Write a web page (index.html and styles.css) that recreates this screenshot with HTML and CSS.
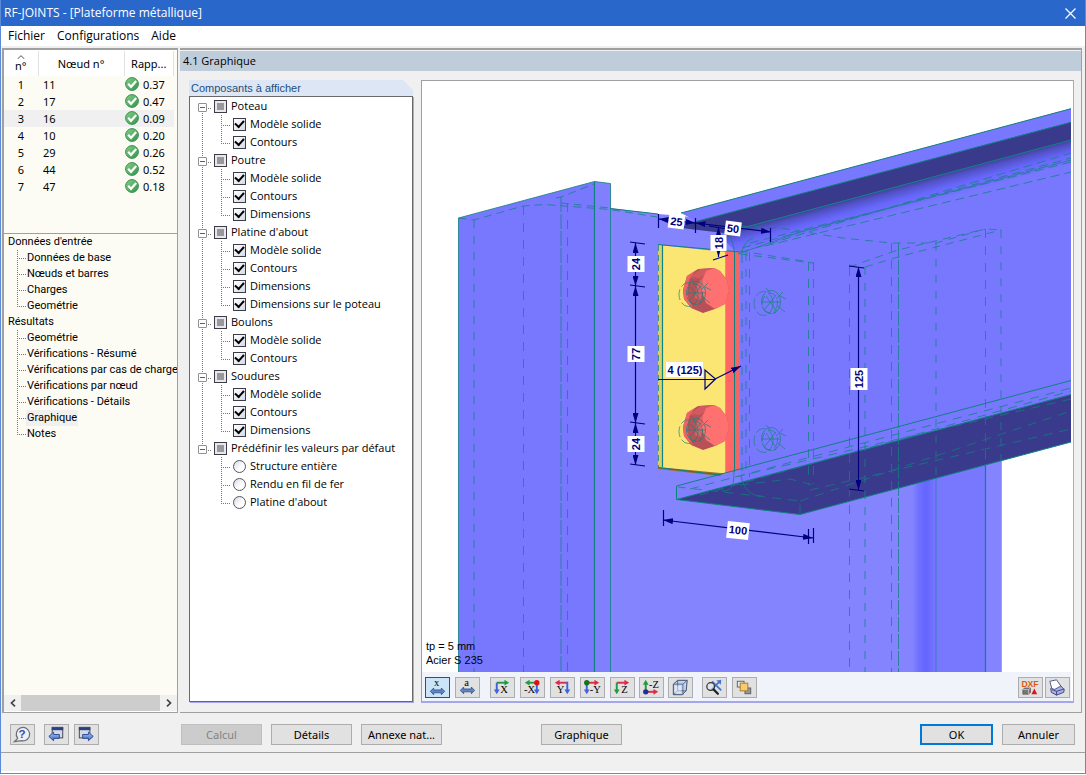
FILE: index.html
```html
<!DOCTYPE html>
<html lang="fr">
<head>
<meta charset="utf-8">
<title>RF-JOINTS - [Plateforme métallique]</title>
<link rel="stylesheet" href="styles.css">
</head>
<body>
<svg class="defs" width="0" height="0" aria-hidden="true">
  <defs>
    <linearGradient id="ok-fill" x1="0" y1="0" x2="1" y2="1"><stop offset="0" stop-color="#86cf8a"/><stop offset="1" stop-color="#2f9448"/></linearGradient>
    <linearGradient id="blue-fill" x1="0" y1="0" x2="0" y2="1"><stop offset="0" stop-color="#a9c6f5"/><stop offset="1" stop-color="#3b68c0"/></linearGradient>
    <symbol id="ok" viewBox="0 0 14 14"><circle cx="7" cy="7" r="6.4" fill="url(#ok-fill)" stroke="#3c8f52" stroke-width="1"/><path d="M3.2 6.8 6 9.8 11.2 4" fill="none" stroke="#fff" stroke-width="2.2"/></symbol>
    <symbol id="spread" viewBox="0 0 16 8"><path d="M0.500 4 4 .5V2.500H12V.5L15.500 4 12 7.500V5.500H4V7.500Z" fill="#5d85c8" stroke="#2c4a86" stroke-width=".8"/></symbol>
  </defs>
</svg>
<div class="window">
  <header class="titlebar">
    <h1>RF-JOINTS - [Plateforme métallique]</h1>
    <button class="close" aria-label="Fermer"><svg width="11" height="11" viewBox="0 0 11 11"><path d="M.5.5l10 10M10.500.5l-10 10" stroke="#fff" stroke-width="1.200"/></svg></button>
  </header>
  <nav class="menubar"><a href="#fichier">Fichier</a><a href="#config">Configurations</a><a href="#aide">Aide</a></nav>

  <main class="workspace">
    <aside class="side">
      <div class="results">
        <table>
          <thead><tr>
            <th class="c-no"><svg width="8" height="4" viewBox="0 0 8 4"><path d="M.5 4 4 .7 7.500 4" fill="none" stroke="#555"/></svg><span>n°</span></th>
            <th class="c-node">Nœud n°</th><th class="c-ratio">Rapp...</th>
          </tr></thead>
          <tbody>
            <tr><td>1</td><td>11</td><td><svg class="ok"><use href="#ok"/></svg>0.37</td></tr>
            <tr><td>2</td><td>17</td><td><svg class="ok"><use href="#ok"/></svg>0.47</td></tr>
            <tr class="current"><td>3</td><td>16</td><td><svg class="ok"><use href="#ok"/></svg>0.09</td></tr>
            <tr><td>4</td><td>10</td><td><svg class="ok"><use href="#ok"/></svg>0.20</td></tr>
            <tr><td>5</td><td>29</td><td><svg class="ok"><use href="#ok"/></svg>0.26</td></tr>
            <tr><td>6</td><td>44</td><td><svg class="ok"><use href="#ok"/></svg>0.52</td></tr>
            <tr><td>7</td><td>47</td><td><svg class="ok"><use href="#ok"/></svg>0.18</td></tr>
          </tbody>
        </table>
      </div>
      <nav class="navtree">
        <span class="root">Données d'entrée</span>
        <ul>
          <li><a href="#base">Données de base</a></li>
          <li><a href="#noeuds">Nœuds et barres</a></li>
          <li><a href="#charges">Charges</a></li>
          <li><a href="#geo1">Geométrie</a></li>
        </ul>
        <span class="root">Résultats</span>
        <ul>
          <li><a href="#geo2">Geométrie</a></li>
          <li><a href="#resume">Vérifications - Résumé</a></li>
          <li><a href="#cas">Vérifications par cas de charge</a></li>
          <li><a href="#noeud">Vérifications par nœud</a></li>
          <li><a href="#details">Vérifications - Détails</a></li>
          <li><a href="#graphique" class="selected" aria-current="page">Graphique</a></li>
          <li><a href="#notes">Notes</a></li>
        </ul>
      </nav>
      <div class="hscroll">
        <button aria-label="Défiler à gauche"><svg width="6" height="8" viewBox="0 0 6 8"><path d="M5 .7 1.500 4 5 7.300" fill="none" stroke="#444" stroke-width="1.700"/></svg></button>
        <div class="thumb"></div>
        <button aria-label="Défiler à droite"><svg width="6" height="8" viewBox="0 0 6 8"><path d="M1 .7 4.500 4 1 7.300" fill="none" stroke="#444" stroke-width="1.700"/></svg></button>
      </div>
    </aside>

    <section class="panel">
      <h2>4.1 Graphique</h2>
      <div class="panel-body">
        <section class="components">
          <h3>Composants à afficher</h3>
          <ul class="tree">
            <li class="group"><div class="head"><button class="toggle" aria-label="Réduire"></button><label><input type="checkbox" class="partial">Poteau</label></div>
              <ul><li><label><input type="checkbox" checked>Modèle solide</label></li><li><label><input type="checkbox" checked>Contours</label></li></ul></li>
            <li class="group"><div class="head"><button class="toggle" aria-label="Réduire"></button><label><input type="checkbox" class="partial">Poutre</label></div>
              <ul><li><label><input type="checkbox" checked>Modèle solide</label></li><li><label><input type="checkbox" checked>Contours</label></li><li><label><input type="checkbox" checked>Dimensions</label></li></ul></li>
            <li class="group"><div class="head"><button class="toggle" aria-label="Réduire"></button><label><input type="checkbox" class="partial">Platine d'about</label></div>
              <ul><li><label><input type="checkbox" checked>Modèle solide</label></li><li><label><input type="checkbox" checked>Contours</label></li><li><label><input type="checkbox" checked>Dimensions</label></li><li><label><input type="checkbox" checked>Dimensions sur le poteau</label></li></ul></li>
            <li class="group"><div class="head"><button class="toggle" aria-label="Réduire"></button><label><input type="checkbox" class="partial">Boulons</label></div>
              <ul><li><label><input type="checkbox" checked>Modèle solide</label></li><li><label><input type="checkbox" checked>Contours</label></li></ul></li>
            <li class="group"><div class="head"><button class="toggle" aria-label="Réduire"></button><label><input type="checkbox" class="partial">Soudures</label></div>
              <ul><li><label><input type="checkbox" checked>Modèle solide</label></li><li><label><input type="checkbox" checked>Contours</label></li><li><label><input type="checkbox" checked>Dimensions</label></li></ul></li>
            <li class="group"><div class="head"><button class="toggle" aria-label="Réduire"></button><label><input type="checkbox" class="partial">Prédéfinir les valeurs par défaut</label></div>
              <ul><li><label><input type="radio" name="preset">Structure entière</label></li><li><label><input type="radio" name="preset">Rendu en fil de fer</label></li><li><label><input type="radio" name="preset">Platine d'about</label></li></ul></li>
          </ul>
        </section>

        <section class="viewer">
          <svg class="scene" viewBox="422 81 649 591" preserveAspectRatio="xMinYMin slice" role="img" aria-label="Assemblage par platine d'about">
            <defs>
              <linearGradient id="shade" gradientUnits="userSpaceOnUse" x1="780" y1="216" x2="787" y2="242"><stop offset="0" stop-color="#3a3a8c"/><stop offset=".25" stop-color="#5252c8"/><stop offset=".55" stop-color="#6666fb"/><stop offset="1" stop-color="#7878ff"/></linearGradient>
              <linearGradient id="fillet" gradientUnits="userSpaceOnUse" x1="898" y1="0" x2="936" y2="0"><stop offset="0" stop-color="#8484ff"/><stop offset=".38" stop-color="#8484ff"/><stop offset=".55" stop-color="#7070ff"/><stop offset=".74" stop-color="#6464ff"/><stop offset="1" stop-color="#7878ff"/></linearGradient>
              <marker id="arrow" viewBox="0 0 10 6" refX="10" refY="3" markerWidth="10" markerHeight="6" markerUnits="userSpaceOnUse" orient="auto-start-reverse"><path d="M0 0 10 3 0 6Z" fill="#00007e"/></marker>
              <g id="bolt">
                <path d="M683 290 687 276 698 269 714 268 720 271 727 280 729 291 725 304 715 309 703 313 691 308 684 299Z" fill="#b95058"/>
                <path d="M683 290 687 276 695 271 689 280 688 297 693 309 684 299Z" fill="#f06464"/>
                <path d="M694 274 700 269 714 268 703 276 697 280 690 277Z" fill="#d05a5e"/>
                <path d="M694 277 688 284 688 297 697 309 703 295 701 279Z" fill="#b85256"/>
                <path d="M697 285 706 273 701 301 695 298Z" fill="#df6266"/>
                <path d="M706 271 714 268 720 271 727 280 729 291 725 304 715 309 706 303 702 292 703 279Z" fill="#ff7070"/>
              </g>
              <g id="hole" fill="none" stroke="#188080" stroke-width=".7">
                <ellipse cx="763.500" cy="303.500" rx="9.500" ry="12" stroke-dasharray="11 3"/>
                <ellipse cx="771" cy="302" rx="9.500" ry="11.500" stroke-dasharray="14 1"/>
                <ellipse cx="770" cy="303" rx="7.500" ry="10" stroke-dasharray="9 4"/>
                <path d="M766 296 775 309M776 295 765 309M763 302H780M776 299 783 292M778 306 785 312M780 296 786 299M766 288 770 293M777 310 774 314"/>
              </g>
            </defs>
            <rect x="422" y="81" width="649" height="591" fill="#fff"/>

            <!-- column -->
            <path d="M610 208 658 214 683 216 740 224V300H900V672H610Z" fill="#8484ff"/>
            <path d="M458.500 218 594.500 181.500V672H458.500Z" fill="#7878ff"/>
            <path d="M594.500 181.500 610.500 183.500V672H594.500Z" fill="#8080ff"/>
            <rect x="898" y="400" width="38" height="272" fill="url(#fillet)"/>
            <rect x="936" y="400" width="49" height="272" fill="#7878ff"/>
            <rect x="985" y="400" width="16" height="272" fill="#8484ff"/>

            <!-- beam -->
            <path d="M681 213 1071 108.500V395L740 483V252L728 240 696 221Z" fill="#7878ff"/>
            <path d="M724 233 1071 140V168L740 256 727 243Z" fill="url(#shade)"/>
            <path d="M696 221.500 1071 122V140L730 231 724 233 681 228 690 222Z" fill="#3a3a8c"/>
            <path d="M676.500 486 740 469V483L676.500 499.500Z" fill="#8080ff"/>
            <path d="M676.500 499.500 1071 394.500V442L800 514.500Z" fill="#3a3a8c"/>

            <!-- end plate and welds -->
            <path d="M658 467 725 472 720 476 658 469Z" fill="#9a6d28"/>
            <path d="M658 245 725.500 252V473.500L658 467Z" fill="#fbe674"/>
            <path d="M658 245H663V467H658Z" fill="#dfcd68"/>
            <path d="M725.500 252H740V469L725.500 474Z" fill="#ff6666"/>
            <path d="M735 252H740V469L735 471Z" fill="#e66"/>
            <use href="#bolt"/><use href="#bolt" y="137"/>

            <!-- contours -->
            <g fill="none" stroke="#108080">
              <path d="M458.500 672V218L594.500 181.500 610.500 183.500V672" stroke-width="1" opacity=".8"/>
              <path d="M594.500 181.500V672M985.500 465V672M662.500 245V467" stroke-width="1.200"/>
              <path d="M610 208.500 658 214M681 213 1071 108.700M696 221.500 1071 122.300M676.500 499.500V486L1071 380.500M676.500 499.500 1071 394.500M676.500 499.500 800 514.500 1071 442M658 244.500 740 252M734.500 252V472M658 467.500 720 475M724 233 1071 140" stroke-width="1"/>
              <path d="M1001.500 461V672M936 478V672" opacity=".55"/>
              <g opacity=".75">
                <path d="M523.500 206V672M567.500 203V672M849.500 267V672M891.500 243V672M985.500 229V465M749.500 252V477M808.500 262V485M813.500 262V484" stroke-dasharray="9 8"/>
                <path d="M561 197V672M898.500 243V672" stroke-dasharray="15 2"/>
                <path d="M658.500 245V467" stroke-dasharray="6 4"/>
                <path d="M458.500 218 474 220 523 206 545 204.500 610 209.500 657 217M556 198 561 197 594 184M561 203 610 208" stroke-dasharray="8 5"/>
                <path d="M740 254 813 263M740 251 810 262M740 226 780 228 843 238 891 243 936 243 985 229 1001 230M849 267 898 250 985 229M865 267 898 257 1001 230M849 265 865 268" stroke-dasharray="8 6"/>
                <path d="M742 252 1071 153M742 248 1071 158M750 243 1071 162M765 246 1071 172" stroke-dasharray="9 5"/>
                <path d="M738 254 800 232 1071 160" stroke-dasharray="12 1"/>
                <path d="M690 489 1071 388M700 495 1071 391M735 477 1071 399M800 501 1071 411M810 490 1071 429M800 514V501L740 494 678 487M740 485 790 479 813 485" stroke-dasharray="9 7"/>
                <path d="M734 470C734 486 732 491 722 491M741 476C744 490 751 496 762 496M734 252C734 244 731 238 728 235M742 252C744 243 748 240 753 238"/>
              </g>
              <g opacity=".38" stroke-width="2" stroke-dasharray="8 8">
                <path d="M474 220V672M865 267V672M936 243V480M1001 230V461M742 255V472M746 253V475"/>
              </g>
            </g>
            <use href="#hole"/><use href="#hole" y="137"/>
            <use href="#hole" x="-75" y="-9"/><use href="#hole" x="-75" y="128"/>

            <!-- dimensions -->
            <g stroke="#00007e" fill="none" stroke-width="1.200">
              <path d="M658.500 214V228M695.500 218V233M770.500 228V242M630 242 645 244M630 285 645 287M630 422 645 424M630 464 645 466M713 260 728 255M709 226 727 229M849 266 864 268M849 489 864 491M663.500 510V526M808.500 529V544M813.500 528V543"/>
              <g marker-start="url(#arrow)" marker-end="url(#arrow)">
                <path d="M658.500 219 695.500 223"/><path d="M695.500 223 771 232"/><path d="M718.500 227V257"/>
                <path d="M635.500 243V286"/><path d="M635.500 286V423"/><path d="M635.500 423V465"/>
                <path d="M858.500 267V490"/><path d="M663 520 813 538"/>
              </g>
              <path d="M658 379.500H715M705 370V389L715.500 379Z"/>
              <path d="M715 379 741 366" marker-end="url(#arrow)"/>
            </g>
            <g class="dims">
              <g transform="translate(676.500 221.500) rotate(7)"><rect x="-8" y="-7" width="16" height="14"/><text y="4">25</text></g>
              <g transform="translate(733 228.500) rotate(7)"><rect x="-8" y="-7" width="16" height="14"/><text y="4">50</text></g>
              <g transform="translate(718.500 243) rotate(-90)"><rect x="-8" y="-8" width="16" height="16"/><text y="4">18</text></g>
              <g transform="translate(635.500 264) rotate(-90)"><rect x="-8" y="-8" width="16" height="17"/><text y="4">24</text></g>
              <g transform="translate(635.500 354) rotate(-90)"><rect x="-8" y="-8" width="16" height="17"/><text y="4">77</text></g>
              <g transform="translate(635.500 444) rotate(-90)"><rect x="-8" y="-8" width="16" height="17"/><text y="4">24</text></g>
              <g transform="translate(858.500 379) rotate(-90)"><rect x="-11" y="-8" width="22" height="17"/><text y="4">125</text></g>
              <g transform="translate(738 530) rotate(6)"><rect x="-11" y="-8" width="22" height="17"/><text y="4">100</text></g>
              <g transform="translate(685 370)"><rect x="-19" y="-8" width="37" height="15"/><text y="4">4 (125)</text></g>
            </g>
            <g class="notes"><text x="426" y="650">tp = 5 mm</text><text x="426" y="664">Acier S 235</text></g>
          </svg>

          <div class="toolbar">
            <div class="tools">
              <button class="active" aria-label="Dimensions X"><svg viewBox="0 0 24 18"><text class="g" x="11" y="7">x</text><use href="#spread" x="4" y="9" width="16" height="8"/></svg></button>
              <button aria-label="Annotations"><svg viewBox="0 0 24 18"><text class="g" x="11" y="7">a</text><use href="#spread" x="4" y="8" width="16" height="8"/></svg></button>
            </div>
            <div class="tools">
              <button aria-label="Vue X"><svg viewBox="0 0 24 18"><path d="M6 4H15" stroke="#1f9c3f" stroke-width="2"/><path d="M14 1 19 4 14 7Z" fill="#1f9c3f"/><path d="M6 4V12" stroke="#3d62dc" stroke-width="2"/><path d="M3 11 6 16 9 11Z" fill="#3d62dc"/><text class="g" x="13.500" y="15">X</text></svg></button>
              <button aria-label="Vue -X"><svg viewBox="0 0 24 18"><path d="M8 4H16" stroke="#1f9c3f" stroke-width="2"/><path d="M9 1 4 4 9 7Z" fill="#1f9c3f"/><path d="M16.500 5V12" stroke="#3d62dc" stroke-width="2"/><path d="M13.500 11 16.500 16 19.500 11Z" fill="#3d62dc"/><circle cx="16.500" cy="4" r="2.800" fill="#d11"/><text class="g" x="9" y="15">-X</text></svg></button>
              <button aria-label="Vue Y"><svg viewBox="0 0 24 18"><path d="M8 4H17" stroke="#e02848" stroke-width="2"/><path d="M9 1 4 4 9 7Z" fill="#e02848"/><path d="M17 3V12" stroke="#3d62dc" stroke-width="2"/><path d="M14 11 17 16 20 11Z" fill="#3d62dc"/><text class="g" x="10" y="15">Y</text></svg></button>
              <button aria-label="Vue -Y"><svg viewBox="0 0 24 18"><path d="M6 4H15" stroke="#e02848" stroke-width="2"/><path d="M14 1 19 4 14 7Z" fill="#e02848"/><path d="M6 4V12" stroke="#3d62dc" stroke-width="2"/><path d="M3 11 6 16 9 11Z" fill="#3d62dc"/><circle cx="6" cy="4" r="2.800" fill="#16721f"/><text class="g" x="15" y="15">-Y</text></svg></button>
              <button aria-label="Vue Z"><svg viewBox="0 0 24 18"><path d="M6 4H15" stroke="#e02848" stroke-width="2"/><path d="M14 1 19 4 14 7Z" fill="#e02848"/><path d="M6 4V12" stroke="#1f9c3f" stroke-width="2"/><path d="M3 11 6 16 9 11Z" fill="#1f9c3f"/><text class="g" x="14" y="15">Z</text></svg></button>
            </div>
            <div class="tools tight">
              <button aria-label="Vue -Z"><svg viewBox="0 0 24 18"><path d="M6 5V13" stroke="#1f9c3f" stroke-width="2"/><path d="M3 6 6 1 9 6Z" fill="#1f9c3f"/><path d="M6 13.500H15" stroke="#e02848" stroke-width="2"/><path d="M14 10.500 19 13.500 14 16.500Z" fill="#e02848"/><circle cx="6" cy="13.500" r="2.800" fill="#1e2f9e"/><text class="g" x="14.500" y="9">-Z</text></svg></button>
              <button aria-label="Vue isométrique"><svg viewBox="0 0 24 18"><path d="M4.500 5.500 9 1.500H19L18 12 14 16.500H4.500Z" fill="#c3d3ee" stroke="#3f4b66"/><path d="M4.500 5.500H14.500V16.500M14.500 5.500 19 1.500M9 1.500V12.500H18M9 12.500 4.500 16.500" fill="none" stroke="#56668a"/><path d="M6 7H13V15H6Z" fill="#fff" opacity=".45"/></svg></button>
            </div>
            <div class="tools last">
              <button aria-label="Zoom ajusté"><svg viewBox="0 0 24 18"><path d="M9.500 2.500 19 12M18.500 1.500 8 12" stroke="#3f74d0" stroke-width="1.800" fill="none"/><path d="M14 1.500 19 1.500 18.500 6Z" fill="#3f74d0"/><circle cx="8" cy="8" r="4" fill="#dde7f0" fill-opacity=".6" stroke="#333" stroke-width="1.300"/><path d="M11 11 15.500 15.500" stroke="#222" stroke-width="2.400" stroke-linecap="round"/></svg></button>
              <button aria-label="Calques"><svg viewBox="0 0 24 18"><rect x="4.500" y="2.500" width="7" height="6" fill="#e9ecee" stroke="#59616b"/><rect x="12.500" y="9.500" width="6" height="6" fill="#8f98a3" stroke="#59616b"/><rect x="7.500" y="4.500" width="8" height="8" fill="#f9cb70" stroke="#a47b28"/></svg></button>
            </div>
            <div class="tools end">
              <button aria-label="Export DXF"><svg viewBox="0 0 24 18"><text x="11.500" y="8" text-anchor="middle" font-size="9" font-weight="bold" fill="#d85a10" class="dxf">DXF</text><path d="M4 11 6 9.500H12V14L10 16H4Z" fill="#777" stroke="#444" stroke-width=".6"/><path d="M4 11H10V16M10 11 12 9.500" stroke="#ddd" stroke-width=".7" fill="none"/><path d="M13 16 16 10 19 16Z" fill="#e01414"/></svg></button>
              <button aria-label="Imprimer"><svg viewBox="0 0 24 18"><path d="M5 10 8 7 15 7 19 11 18.500 14 11 17 5.500 14Z" fill="#a9b2e4" stroke="#3d4684"/><path d="M4 2.500 11 1 15.500 7.500 9 11 6 10Z" fill="#fff" stroke="#4a5390"/><path d="M6 11 11 13 19 10.500M11 13V17" fill="none" stroke="#3d4684"/></svg></button>
            </div>
          </div>
        </section>
      </div>
    </section>
  </main>

  <footer class="actions">
    <div class="cluster help"><button class="icon" aria-label="Aide"><svg viewBox="0 0 24 18"><path d="M7 13 3.500 16.500 11 15.500A7 7 0 1 0 7 13Z" fill="#eef0f2" stroke="#6a7078" stroke-width="1.300"/><text x="11.500" y="13" text-anchor="middle" font-size="12" font-weight="bold" fill="#2f4fae" class="dxf">?</text></svg></button></div>
    <div class="cluster nav">
      <button class="icon" aria-label="Précédent"><svg viewBox="0 0 24 18"><rect x="7.500" y="1.500" width="11" height="11" fill="#d6dae0" stroke="#3f4654"/><path d="M7 3H19" stroke="#2c3f86" stroke-width="3"/><path d="M4 11 9 6.500V9H15V13H9V15.500Z" fill="url(#blue-fill)" stroke="#1e3f90" stroke-width=".9"/></svg></button>
      <button class="icon" aria-label="Suivant"><svg viewBox="0 0 24 18"><rect x="4.500" y="1.500" width="11" height="11" fill="#d6dae0" stroke="#3f4654"/><path d="M4 3H16" stroke="#2c3f86" stroke-width="3"/><path d="M19 11 14 6.500V9H8V13H14V15.500Z" fill="url(#blue-fill)" stroke="#1e3f90" stroke-width=".9"/></svg></button>
    </div>
    <div class="cluster main-actions"><button disabled>Calcul</button><button>Détails</button><button>Annexe nat...</button></div>
    <div class="cluster view"><button>Graphique</button></div>
    <div class="cluster confirm"><button class="default">OK</button><button>Annuler</button></div>
  </footer>
  <div class="statusbar"></div>
</div>
</body>
</html>
```
FILE: styles.css
```css
* { box-sizing: border-box; }
html, body { height: 100%; margin: 0; }
body { background: #fff; color: #000; font: 11px/16px "Noto Sans", sans-serif; }
h1, h2, h3, ul { margin: 0; padding: 0; font-weight: normal; list-style: none; }
a { color: inherit; text-decoration: none; }
button { font: inherit; padding: 0; border: 0; background: none; }
.defs { position: absolute; }

.window { display: flex; flex-direction: column; height: calc(100vh - 1px); background: #f0f0f0; border: solid #5b8ad8; border-width: 0 1px 1px; }

.titlebar { display: flex; align-items: center; justify-content: space-between; height: 26px; padding: 0 9px 0 3px; background: #2a67cb; color: #fff; }
.titlebar h1 { font: 12px/16px "Open Sans", sans-serif; }
.close { display: flex; }
.menubar { display: flex; gap: 12px; height: 20px; padding: 1px 7px; background: #fff; font: 12px/18px "Open Sans", sans-serif; }

.workspace { display: flex; gap: 2px; flex: 1; min-height: 0; padding: 2px 3px 2px 1px; }

.side { display: flex; flex-direction: column; width: 176px; background: #fcfcf4; border: solid #a0a0a0; border-width: 2px 1px 1px 2px; }
.results { height: 184px; border-top: 1px solid #fff; border-bottom: 1px solid #a0a0a0; }
.results table { width: 170px; border-collapse: collapse; table-layout: fixed; }
.results th { height: 25px; padding: 0; background: #fff; border-right: 1px solid #e2e2e2; font-weight: normal; }
.results th svg { display: block; margin: 0 auto; }
.results th span { display: block; line-height: 14px; }
.c-no { width: 34px; }
.c-node { width: 86px; }
.results td { height: 17px; padding: 0; line-height: 16px; }
.results td:first-child { text-align: center; }
.results td:nth-child(2) { padding-left: 5px; }
.ok { width: 14px; height: 14px; margin: 0 4px 0 1px; vertical-align: -2px; }
.current { background: #f0f0f0; }

.navtree { flex: 1; min-height: 0; overflow: hidden; white-space: nowrap; font-family: Roboto, sans-serif; }
.root { display: block; padding-left: 4px; }
.navtree ul { padding-left: 13px; }
.navtree li { display: flex; height: 16px; }
.navtree li::before, .tree ul li::before { content: ""; flex: none; width: 9px; background: repeating-linear-gradient(to bottom, #777 0 1px, transparent 1px 2px) 0 0 / 1px 100% no-repeat, repeating-linear-gradient(to right, #777 0 1px, transparent 1px 2px) 0 8px / 100% 1px no-repeat; }
.navtree li:last-child::before, .tree ul li:last-child::before { background-size: 1px 9px, 100% 1px; }
.navtree a { padding: 0 1px; }
.selected { background: #f0f0f0; }

.hscroll { display: flex; height: 17px; background: #f0f0f0; border-bottom: 1px solid #fff; }
.hscroll button { display: grid; place-items: center; width: 17px; }
.thumb { flex: 1; background: #cdcdcd; }

.panel { display: flex; flex-direction: column; flex: 1; min-width: 0; border: solid #a0a0a0; border-width: 2px 1px 1px 0; }
.panel h2 { height: 20px; margin-top: 1px; padding: 1px 3px; background: #bfccda; font: 11px/18px "Open Sans", sans-serif; }
.panel-body { display: flex; gap: 7px; flex: 1; min-height: 0; padding: 9px 7px 9px 9px; }

.components { display: flex; flex-direction: column; width: 225px; padding: 0 1px 1px 0; }
.components h3 { height: 16px; padding: 0 2px; background: #dce6f4; color: #1f4e79; font: 11px/17px "Liberation Sans", sans-serif; clip-path: polygon(0 0, calc(100% - 10px) 0, 100% 10px, 100% 100%, 0 100%); }
.tree { flex: 1; background: #fff; border: 1px solid #696969; box-shadow: 1px 1px #a6a6ea; font: 11px/18px "Open Sans", sans-serif; white-space: nowrap; overflow: hidden; }
.group { padding-left: 8px; background: repeating-linear-gradient(to bottom, #777 0 1px, transparent 1px 2px) 12px 0 / 1px 100% no-repeat; }
.group:last-child { background-size: 1px 10px; }
.group:first-child { background-position: 12px 10px; }
.head { display: flex; align-items: center; height: 18px; }
.toggle { width: 9px; height: 9px; margin-top: 2px; border: 1px solid #919191; border-radius: 1px; background: linear-gradient(#3a5fc0, #3a5fc0) center / 5px 1px no-repeat #fff; }
.toggle + label { padding-left: 7px; background: repeating-linear-gradient(to right, #777 0 1px, transparent 1px 2px) 1px 11px / 4px 1px no-repeat; }
.tree label { display: flex; align-items: center; gap: 4px; height: 18px; }
.tree ul { padding-left: 23px; }
.tree ul li { display: flex; gap: 3px; height: 18px; }
.tree ul li::before { background-position: 0 0, 0 10px; }
.tree ul li:last-child::before { background-size: 1px 11px, 100% 1px; }
.tree input { appearance: none; width: 13px; height: 13px; margin: 0; border: 1px solid #3c3c46; background: linear-gradient(135deg, #fff, #d4dae6); }
.tree input:checked { display: grid; place-items: center; }
.tree input:checked::before { content: ""; width: 7px; height: 4px; margin-top: -3px; border: solid #000; border-width: 0 0 2px 2px; transform: rotate(-48deg); }
.tree .partial { background: linear-gradient(#999, #999) center / 7px 7px no-repeat, #e8e8ee; }
.tree input[type="radio"] { border-radius: 50%; border-color: #55555f; background: linear-gradient(135deg, #d4dae6, #fff 60%); }

.viewer { display: flex; flex-direction: column; flex: 1; min-width: 0; border: solid #a6a6ea; border-width: 1px 1px 2px; border-top-color: #a0a0a0; border-left-color: #a0a0a0; padding-right: 2px; background: #fff; }
.scene { display: block; flex: 1; width: 100%; min-height: 0; }
.dims rect { fill: #fff; }
.dims text { fill: #00007e; font: bold 11px "Liberation Sans", sans-serif; text-anchor: middle; }
.notes text { font: 11px "Liberation Sans", sans-serif; }
.toolbar { display: flex; gap: 10px; height: 29px; padding: 5px 1px 0 3px; background: #f0f4fa; }
.tools { display: flex; gap: 5px; }
.tight { gap: 4px; margin-left: -6px; }
.last { margin-left: -1px; }
.end { gap: 2px; margin-left: auto; }
.tools button, .icon { width: 25px; height: 21px; border: 1px solid #adadad; background: #e1e1e1; }
.tools svg, .icon svg { display: block; width: 100%; height: 100%; }
.tools .active { border-color: #0a5a9c; background: #cce4f7; }
.g { font-family: "Liberation Serif", serif; font-size: 11px; text-anchor: middle; }
.dxf { font-family: "Liberation Sans", sans-serif; }

.actions { display: flex; height: 38px; padding: 9px 10px 0 9px; border-bottom: 1px solid #a0a0a0; }
.cluster { display: flex; gap: 9px; }
.cluster button { width: 81px; height: 21px; border: 1px solid #adadad; background: #e1e1e1; }
.cluster .icon { width: 25px; }
.nav { gap: 5px; margin-left: 9px; }
.main-actions { margin-left: 82px; }
.view { margin-left: 99px; }
.confirm { margin-left: auto; }
.confirm button { width: 73px; }
.cluster .default { border: 2px solid #0078d7; }
.cluster button:disabled { background: #ccc; border-color: #bfbfbf; color: #838383; }
.statusbar { height: 20px; border-bottom: 2px solid #fff; }
```
